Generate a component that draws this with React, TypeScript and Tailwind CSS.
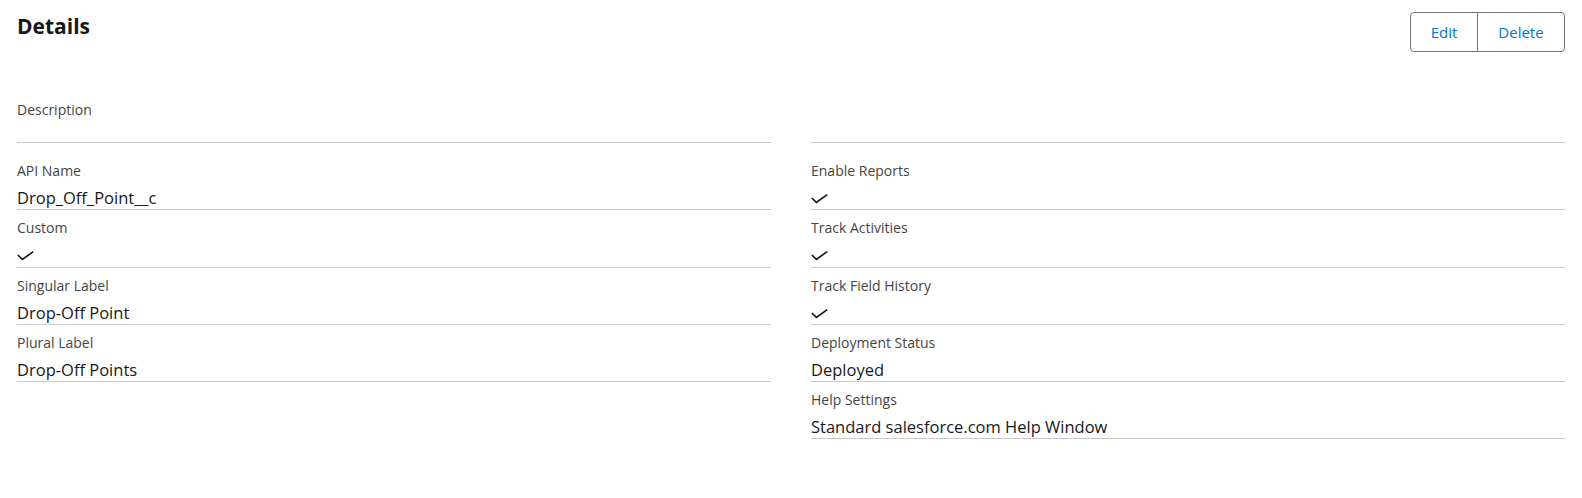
import React from 'react';

type Row = { label: string; value?: string; check?: boolean };

const leftRows: Row[] = [
  { label: 'API Name', value: 'Drop_Off_Point__c' },
  { label: 'Custom', check: true },
  { label: 'Singular Label', value: 'Drop-Off Point' },
  { label: 'Plural Label', value: 'Drop-Off Points' },
];

const rightRows: Row[] = [
  { label: 'Enable Reports', check: true },
  { label: 'Track Activities', check: true },
  { label: 'Track Field History', check: true },
  { label: 'Deployment Status', value: 'Deployed' },
  { label: 'Help Settings', value: 'Standard salesforce.com Help Window' },
];

const Check = () => (
  <svg width="17" height="11" viewBox="0 0 17 11" className="block">
    <path d="M0.8 5 L5.4 9.4 L16.2 1.6" fill="none" stroke="#181818" strokeWidth="1.7" />
  </svg>
);

const Field = ({ row }: { row: Row }) => (
  <div className="border-b border-[#c9c9c9] pt-2">
    <div className="text-[14px] leading-5 text-[#444444]">{row.label}</div>
    <div className="mt-[5px] flex h-[23.3px] items-start text-[16.5px] leading-[23px] text-[#181818]">
      {row.check ? (
        <span className="pt-[7px]">
          <Check />
        </span>
      ) : (
        row.value
      )}
    </div>
  </div>
);

export default function App() {
  return (
    <div className="w-[1582px] min-h-[498px] bg-white px-[17px] pt-3 font-['Open_Sans','Noto_Sans',sans-serif]">
      <div className="flex items-start justify-between">
        <h1 className="text-[21px] leading-[28px] font-bold text-[#181818]">Details</h1>
        <div className="flex h-10 rounded-[4px] border border-[#747474] text-[15px] text-[#0176d3]">
          <button className="w-[67px] border-r border-[#747474]">Edit</button>
          <button className="w-[86px]">Delete</button>
        </div>
      </div>

      <div className="mt-10 grid grid-cols-2 gap-x-10">
        <div className="h-[51px] border-b border-[#c9c9c9] pt-2">
          <div className="text-[14px] leading-5 text-[#444444]">Description</div>
        </div>
        <div className="h-[51px] border-b border-[#c9c9c9]" />
      </div>

      <div className="mt-[10px] grid grid-cols-2 items-start gap-x-10">
        <div className="flex flex-col">
          {leftRows.map((r) => (
            <Field key={r.label} row={r} />
          ))}
        </div>
        <div className="flex flex-col">
          {rightRows.map((r) => (
            <Field key={r.label} row={r} />
          ))}
        </div>
      </div>
    </div>
  );
}
